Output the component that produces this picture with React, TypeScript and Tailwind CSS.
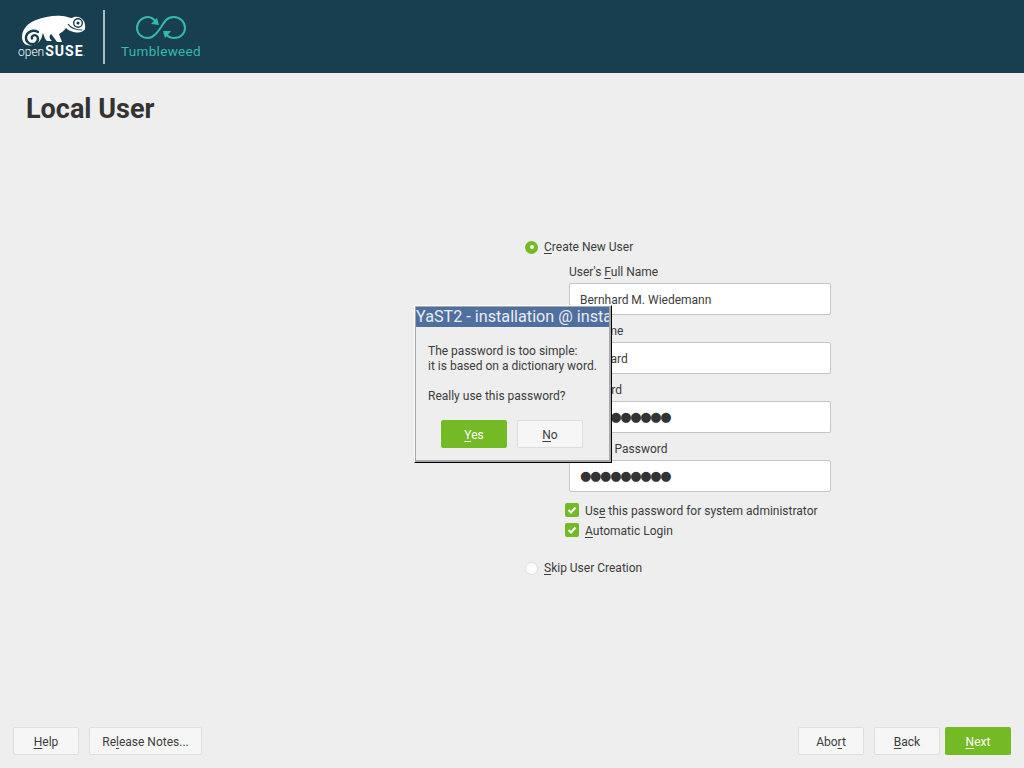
import React from "react";

const font = "font-['Roboto','Liberation_Sans',sans-serif]";

function Mn({ children }: { children: React.ReactNode }) {
  return <span className="underline decoration-1 underline-offset-2">{children}</span>;
}

function Logo() {
  return (
    <div className="flex h-full items-start">
      {/* openSUSE mark */}
      <div className="ml-[18px] flex w-[70px] flex-col items-start pt-[14px]">
        <svg width="70" height="32" viewBox="18 14 70 32">
          <path
            fill="#fff"
            d="M22 37C22 29 28 23 36 20C44 17 54 15 62 16C66 16 69 18 72 18C75 16 80 16 83 20C85 22 85.5 26 85 29C84 31 80 33 76 32.5C71 32 68 30 66 28C64 31 61 33 59 34L62 42L57 42C55 39 53 36 51 34C49 36 49 38 52 41L47 41C44 38 44 35 43 33C42 35 42 39 39 42C36 45 30 46 27 45C24 44 22 41 22 37Z"
          />
          <path d="M38 32C33 29 26 32 26 38C26 43 31 45 35 43.5C38.5 42 39 37 36 35.5C34 34.5 31 36 32 38.5" fill="none" stroke="#173f4f" strokeWidth="2.4" strokeLinecap="round" />
          <circle cx="78" cy="23" r="5" fill="#173f4f" />
          <circle cx="78" cy="23" r="3.6" fill="#fff" />
          <circle cx="78" cy="23" r="1.6" fill="#173f4f" />
          <path d="M68 24C70 27 74 30 82 30" fill="none" stroke="#173f4f" strokeWidth="1.2" />
        </svg>
        <div className="mt-[-2px] flex items-baseline leading-none text-white">
          <span className="text-[12px] font-light">open</span>
          <span className="ml-[1px] text-[14px] font-bold tracking-[1px]">SUSE</span>
          <span className="text-[6px]">.</span>
        </div>
      </div>
      <div className="ml-[15px] mt-[10px] h-[54px] w-[2px] bg-[#a9bcc3]" />
      {/* Tumbleweed mark */}
      <div className="ml-[16px] flex w-[80px] flex-col items-center pt-[16px] text-[#35b9ab]">
        <svg width="50" height="23" viewBox="0 0 50 23" fill="none" stroke="currentColor" strokeWidth="2">
          <path d="M21 7C18 3 15 1 12 1C6 1 1 6 1 12C1 18 6 22 12 22C20 22 25 10 30 4C32 2 35 1 38 1C44 1 49 6 49 12C49 18 44 22 38 22C34 22 31 20 28 17" />
          <path fill="currentColor" stroke="none" d="M23 9L21 2L15 8Z" />
          <path fill="currentColor" stroke="none" d="M27 15L35 15L29 22Z" />
        </svg>
        <span className="mt-[6px] text-[13.5px] leading-none tracking-[0.3px]">Tumbleweed</span>
      </div>
    </div>
  );
}

function Field({ label, value, dots }: { label: React.ReactNode; value?: string; dots?: boolean }) {
  return (
    <div className="flex flex-col">
      <div className="h-[17px] text-xs leading-[17px]">{label}</div>
      <div className="mt-[2px] flex h-[32px] w-[262px] items-center rounded-[2px] border border-[#c4c4c4] bg-white px-[10px] text-xs">
        {dots ? (
          <span className="font-['DejaVu_Sans',sans-serif] text-[13px] tracking-[-1.3px] text-[#333]">●●●●●●●●●</span>
        ) : (
          <span className="pt-[2px]">{value}</span>
        )}
      </div>
    </div>
  );
}

function Check({ children }: { children: React.ReactNode }) {
  return (
    <div className="flex h-[14px] items-center gap-[6px] text-xs">
      <div className="flex h-[14px] w-[14px] items-center justify-center rounded-[2px] bg-[#73ba25]">
        <svg width="10" height="10" viewBox="0 0 10 10" fill="none" stroke="#fff" strokeWidth="2">
          <path d="M1.5 5L4 7.5L8.5 2.5" />
        </svg>
      </div>
      <span className="pt-[2px]">{children}</span>
    </div>
  );
}

function Radio({ on, children }: { on?: boolean; children: React.ReactNode }) {
  return (
    <div className="flex h-[14px] items-center gap-[6px] text-xs">
      {on ? (
        <div className="flex h-[13px] w-[13px] items-center justify-center rounded-full bg-[#73ba25]">
          <div className="h-[4px] w-[4px] rounded-full bg-white" />
        </div>
      ) : (
        <div className="h-[13px] w-[13px] rounded-full border border-[#d8dce6] bg-white" />
      )}
      <span>{children}</span>
    </div>
  );
}

function Btn({ w, primary, children }: { w: string; primary?: boolean; children: React.ReactNode }) {
  return (
    <button
      className={
        primary
          ? `h-[28px] ${w} rounded-[2px] bg-[#73ba25] pt-px text-xs text-white`
          : `h-[28px] ${w} rounded-[2px] border border-[#dedede] bg-[#f6f6f6] pt-px text-xs text-[#3c3c3c]`
      }
    >
      {children}
    </button>
  );
}

export default function App() {
  return (
    <div className={`${font} relative flex h-[768px] w-[1024px] flex-col overflow-hidden bg-[#eeeeee] text-[#3c3c3c]`}>
      <header className="h-[73px] shrink-0 bg-[#173f4f]">
        <Logo />
      </header>

      <h1 className="ml-[26px] mt-[20px] text-[27px] font-bold leading-[32px] text-[#333]">Local User</h1>

      {/* form */}
      <main className="ml-[525px] mt-[115px] flex flex-1 flex-col">
        <Radio on>
          <Mn>C</Mn>reate New User
        </Radio>
        <div className="ml-[44px] mt-[10px] flex flex-col gap-[8px]">
          <Field label={<>User's <Mn>F</Mn>ull Name</>} value="Bernhard M. Wiedemann" />
          <Field label={<><Mn>U</Mn>sername</>} value="bernhard" />
          <Field label={<><Mn>P</Mn>assword</>} dots />
          <Field label={<>C<Mn>o</Mn>nfirm Password</>} dots />
        </div>
        <div className="ml-[40px] mt-[11px] flex flex-col gap-[6px]">
          <Check>Us<Mn>e</Mn> this password for system administrator</Check>
          <Check><Mn>A</Mn>utomatic Login</Check>
        </div>
        <div className="mt-[24px]">
          <Radio><Mn>S</Mn>kip User Creation</Radio>
        </div>
      </main>

      <footer className="mb-[13px] flex justify-between px-[13px]">
        <div className="flex gap-[10px]">
          <Btn w="w-[66px]"><Mn>H</Mn>elp</Btn>
          <Btn w="w-[113px]">Re<Mn>l</Mn>ease Notes...</Btn>
        </div>
        <div className="flex">
          <Btn w="w-[66px]">Abo<Mn>r</Mn>t</Btn>
          <div className="ml-[10px]"><Btn w="w-[66px]"><Mn>B</Mn>ack</Btn></div>
          <div className="ml-[5px]"><Btn w="w-[66px]" primary><Mn>N</Mn>ext</Btn></div>
        </div>
      </footer>

      {/* popup window */}
      <div className="absolute left-[414px] top-[305px] flex h-[158px] w-[198px] flex-col border border-b-black border-l-white border-r-black border-t-white">
        <div className="flex flex-1 flex-col border-b-2 border-l border-r-2 border-t border-[#a8a8a8] bg-[#eeeeee]">
          <div className="h-[20px] overflow-hidden whitespace-nowrap bg-[#4f6f9f] text-[16.2px] leading-[20px] text-[#e8edf4]">
            YaST2 - installation @ install
          </div>
          <div className="ml-[12px] mt-[17px] text-xs leading-[15px]">
            <p>The password is too simple:</p>
            <p>it is based on a dictionary word.</p>
            <p className="mt-[15px]">Really use this password?</p>
          </div>
          <div className="ml-[25px] mt-[16px] flex gap-[10px]">
            <Btn w="w-[66px]" primary><Mn>Y</Mn>es</Btn>
            <Btn w="w-[66px]"><Mn>N</Mn>o</Btn>
          </div>
        </div>
      </div>
    </div>
  );
}
